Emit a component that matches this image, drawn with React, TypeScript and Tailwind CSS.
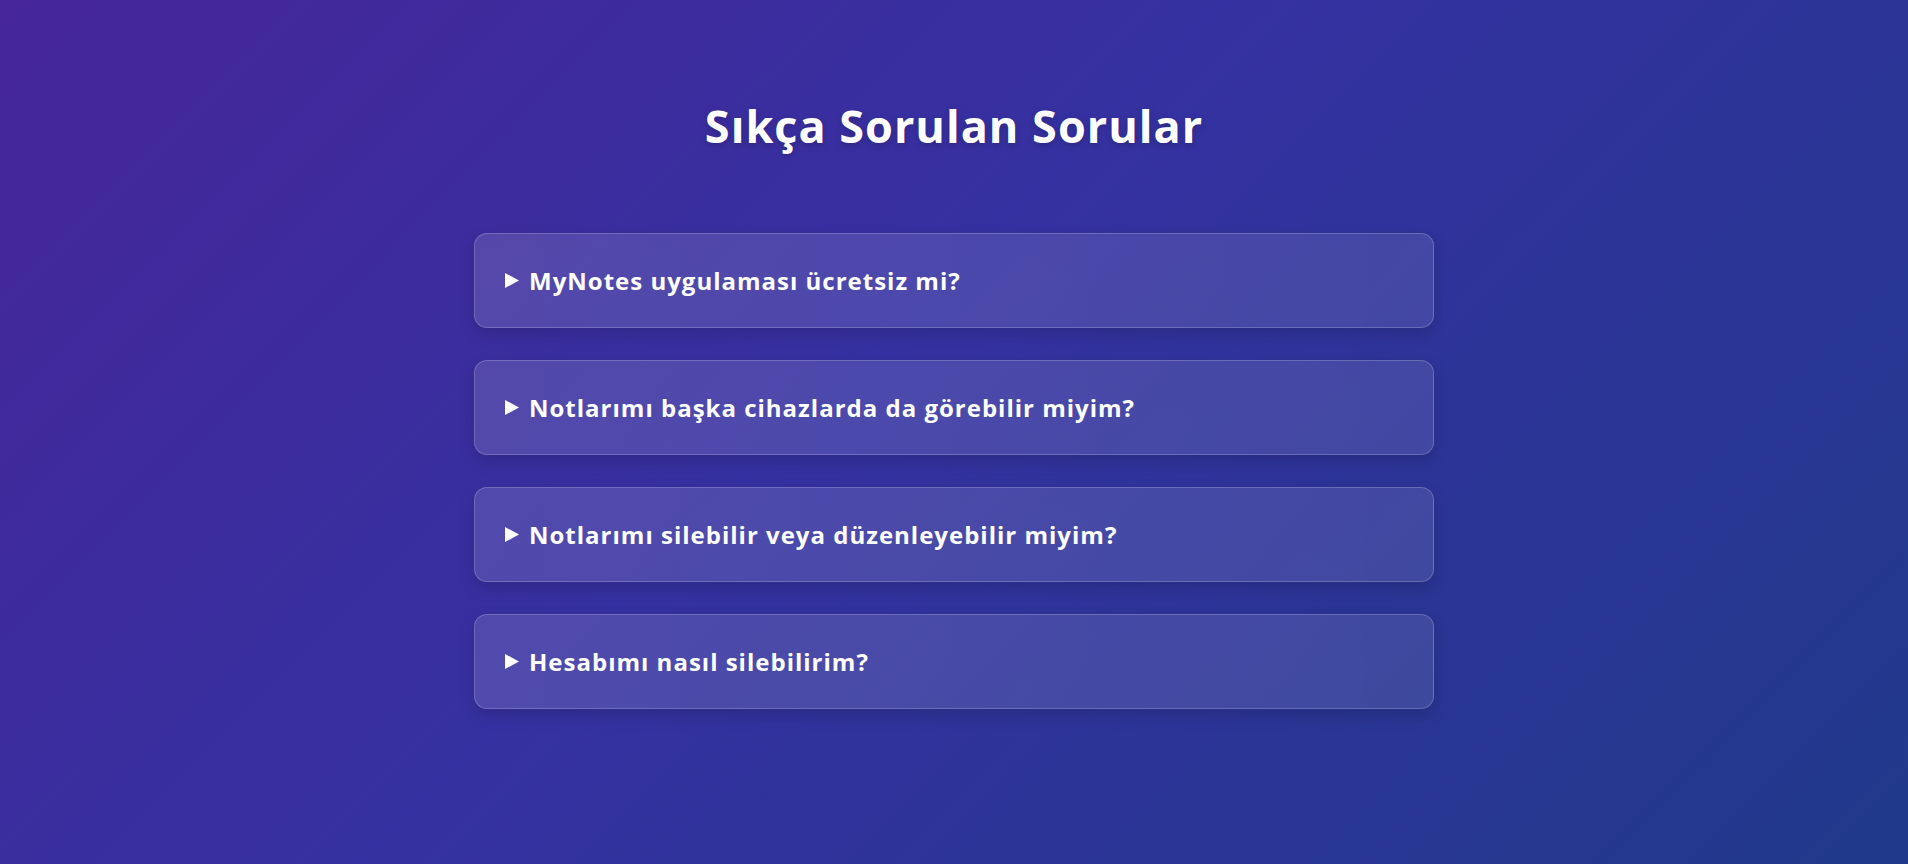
import React from "react";

const faqs = [
  "MyNotes uygulaması ücretsiz mi?",
  "Notlarımı başka cihazlarda da görebilir miyim?",
  "Notlarımı silebilir veya düzenleyebilir miyim?",
  "Hesabımı nasıl silebilirim?",
];

export default function App() {
  return (
    <div
      className="min-h-[864px] w-full bg-[linear-gradient(135deg,#46269a_0%,#3531a1_45%,#20398a_100%)] text-white"
      style={{ fontFamily: '"Open Sans", "Noto Sans", sans-serif' }}
    >
      <div className="flex flex-col items-center pt-[98px]">
        <h1 className="text-[45px] leading-[56px] font-bold tracking-[1px] [text-shadow:0_2px_6px_rgba(0,0,0,0.2)]">
          Sıkça Sorulan Sorular
        </h1>
        <div className="mt-[79px] flex w-[960px] flex-col gap-[32px]">
          {faqs.map((q) => (
            <div
              key={q}
              className="flex h-[95px] items-center gap-[10px] rounded-[13px] border border-white/20 bg-[linear-gradient(90deg,rgba(255,255,255,0.13),rgba(255,255,255,0.1))] pl-[30px] shadow-[0_6px_16px_rgba(0,0,0,0.15)]"
            >
              <svg width="14" height="15" viewBox="0 0 14 15" className="shrink-0">
                <polygon points="0,0 14,7.5 0,15" fill="white" />
              </svg>
              <span className="text-[24px] font-bold leading-none tracking-[1px]">{q}</span>
            </div>
          ))}
        </div>
      </div>
    </div>
  );
}
